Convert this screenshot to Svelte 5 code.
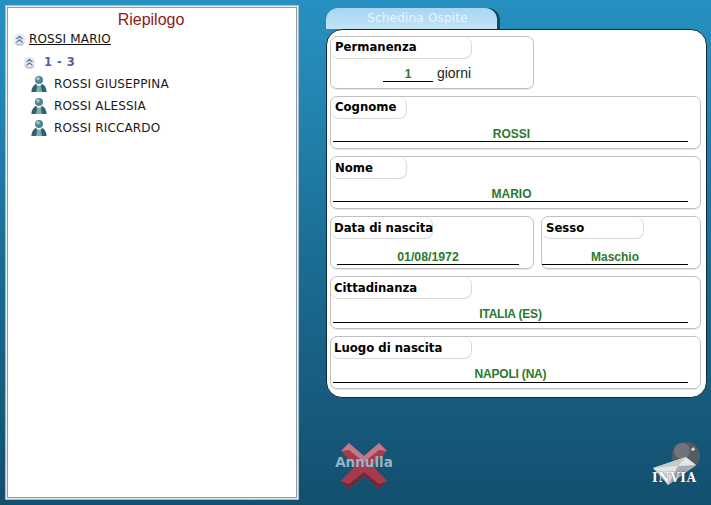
<script>
  const guests = ['ROSSI GIUSEPPINA', 'ROSSI ALESSIA', 'ROSSI RICCARDO'];
  const fields = [
    [{ label: 'Cognome', value: 'ROSSI', tab: 76, cls: 'name tight' }],
    [{ label: 'Nome', value: 'MARIO', tab: 76, cls: 'name' }],
    [
      { label: 'Data di nascita', value: '01/08/1972', tab: 102, cls: 'birth' },
      { label: 'Sesso', value: 'Maschio', tab: 102, cls: 'sex' }
    ],
    [{ label: 'Cittadinanza', value: 'ITALIA (ES)', tab: 141, cls: 'long' }],
    [{ label: 'Luogo di nascita', value: 'NAPOLI (NA)', tab: 141, cls: 'long' }]
  ];
</script>

{#snippet collapse()}
  <svg class="collapse" width="13" height="13" viewBox="0 0 13 13">
    <circle cx="6.5" cy="6.5" r="6" fill="#e8eaee" />
    <path d="M1 9a6 6 0 0 0 11 0a8 8 0 0 1-11 0z" fill="#b4b8c0" />
    <path d="M3.5 6 6.5 3.2 9.5 6M3.500 9.500 6.500 6.700 9.500 9.500" fill="none" stroke="#5a7cab" stroke-width="1.2" />
  </svg>
{/snippet}

<div class="page">
  <aside class="summary">
    <h1>Riepilogo</h1>
    <div class="root">{@render collapse()}<span>ROSSI MARIO</span></div>
    <div class="group">{@render collapse()}<b>1 - 3</b></div>
    <ul>
      {#each guests as g}
        <li>
          <svg width="16" height="18" viewBox="0 0 16 18">
            <path d="M0.500 17c0-4 2-7 4.500-8l3 2 3-2c2.500 1 4.500 4 4.500 8z" fill="#7fae9f" />
            <path d="M0.500 17c0-4 2-7 4.500-8l1 3-1 5zM15.500 17c0-4-2-7-4.500-8l-1 3 1 5z" fill="#2f5f7a" />
            <circle cx="8" cy="5" r="4" fill="#4f8592" />
            <circle cx="7" cy="3.800" r="1.800" fill="#a5c8cc" />
          </svg>
          <span>{g}</span>
        </li>
      {/each}
    </ul>
  </aside>

  <main class="right">
    <div class="tab">Schedina Ospite</div>
    <section class="card">
      <fieldset class="box stay tight">
        <div class="legend" style="width:141px">Permanenza</div>
        <div class="stay-line"><span class="days">1</span> giorni</div>
      </fieldset>
      {#each fields as row}
        <div class="row">
          {#each row as f}
            <fieldset class="box {f.cls}">
              <div class="legend" style="width:{f.tab}px">{f.label}</div>
              <div class="value">{f.value}</div>
            </fieldset>
          {/each}
        </div>
      {/each}
    </section>
    <div class="actions">
      <div class="cancel">
        <svg width="52" height="50" viewBox="0 0 52 50">
          <path d="M3 9 11 1 26 14 41 1 49 9 35 24 49 39 41 47 26 34 11 47 3 39 17 24z" fill="#a83a4e" />
          <path d="M3 9 11 1 26 14 41 1 49 9 41 8 26 20 11 8z" fill="#c0788a" />
          <path d="M3 39 11 47 26 34 41 47 49 39 41 42 26 30 11 42z" fill="#6e2a3a" />
        </svg>
        <span>Annulla</span>
      </div>
      <div class="send">
        <svg width="52" height="46" viewBox="0 0 52 46">
          <circle cx="36" cy="14" r="14" fill="#555b60" />
          <circle cx="32" cy="9" r="8" fill="#6e7478" />
          <path d="M41 7l3-2 1 3-3 1z" fill="#d8dadc" />
          <path d="M3 26 36 15 46 23 18 43z" fill="#e3e6e6" />
          <path d="M3 26 28 24 36 15z" fill="#c4cacc" />
          <path d="M18 43 28 24 46 23z" fill="#a6adb0" />
        </svg>
        <span>INVIA</span>
      </div>
    </div>
  </main>
</div>

<style>
  :global(body) {
    margin: 0;
  }

  .page {
    width: 711px;
    height: 505px;
    box-sizing: border-box;
    padding: 5px 4px 5px 5px;
    display: flex;
    gap: 27px;
    overflow: hidden;
    background: linear-gradient(#2690c0, #2488b6 15%, #1a6a90 55%, #134f6e);
  }

  .summary {
    width: 294px;
    height: 495px;
    box-sizing: border-box;
    flex: none;
    background: #fff;
    border: 1px solid #a9bcc6;
    box-shadow: inset 0 0 0 1px #e6eef2, inset 0 0 0 2px #8b9ea8;
    padding: 4px 0 0 9px;
    font: 12px "DejaVu Sans", Verdana, sans-serif;
    letter-spacing: 0.15px;
    color: #1a1a1a;
  }

  h1 {
    margin: 0 0 0 -11px;
    font: 16px/20px "Liberation Sans", Arial, sans-serif;
    letter-spacing: 0;
    color: #8b1a1a;
    text-align: center;
  }

  .collapse {
    flex: none;
  }

  .root,
  .group,
  li {
    display: flex;
    align-items: center;
  }

  .root {
    height: 18px;
    gap: 3px;
    margin-left: -2px;
  }

  .root span {
    text-decoration: underline;
    color: #111;
  }

  .group {
    height: 22px;
    margin-top: 3px;
    margin-left: 8px;
    gap: 8px;
  }

  .group b {
    color: #4f5ea8;
    font-size: 11.5px;
    letter-spacing: 0.5px;
  }

  ul {
    list-style: none;
    margin: 0;
    padding: 0;
  }

  li {
    height: 22px;
    padding-left: 16px;
    gap: 7px;
  }

  .right {
    width: 381px;
    flex: none;
    display: flex;
    flex-direction: column;
    padding-top: 3px;
  }

  .tab {
    width: 171px;
    height: 21px;
    box-sizing: border-box;
    padding-left: 12px;
    background: linear-gradient(#a6d6f2, #c4e4f6);
    border-radius: 12px 12px 0 0;
    box-shadow: 3px 0 0 #184a66;
    color: #e8f4fb;
    font: 12px/21px "DejaVu Sans", Verdana, sans-serif;
    letter-spacing: 0.2px;
    text-align: center;
  }

  .card {
    box-sizing: border-box;
    height: 369px;
    background: #fff;
    border: 1px solid #0c2a3a;
    border-radius: 16px;
    padding: 6px 5px 0 3px;
    display: flex;
    flex-direction: column;
    gap: 7px;
    position: relative;
  }

  .row {
    display: flex;
    gap: 7px;
  }

  .box {
    margin: 0;
    padding: 0;
    min-width: 0;
    flex: 1;
    height: 53px;
    box-sizing: border-box;
    border: 1px solid #c0c0c0;
    border-radius: 7px;
    box-shadow: 0 1px 0 #e6e6e6;
    display: flex;
    flex-direction: column;
  }

  .stay,
  .birth {
    flex: none;
    width: 204px;
  }

  .legend {
    height: 22px;
    box-sizing: border-box;
    border: 1px solid #d8d8d8;
    border-top: 0;
    border-left: 0;
    border-radius: 0 8px 8px 8px;
    padding-left: 3px;
    font: bold 11.7px/22px "DejaVu Sans", Verdana, sans-serif;
    white-space: nowrap;
    color: #000;
  }

  .tight .legend {
    padding-left: 4px;
    line-height: 20px;
  }

  .name .legend,
  .sex .legend {
    padding-left: 4px;
  }

  .stay-line {
    margin-top: 6px;
    padding-left: 52px;
    font: 14px/17px "Liberation Sans", Arial, sans-serif;
    color: #222;
  }

  .days {
    display: inline-block;
    width: 50px;
    text-align: center;
    border-bottom: 1px solid #000;
    color: #2a7a2a;
    font-size: 12px;
    font-weight: bold;
    line-height: 14px;
  }

  .value {
    margin: 8px 12px 0 2px;
    height: 15px;
    border-bottom: 1px solid #000;
    text-align: center;
    font: bold 12px/15px "Liberation Sans", Arial, sans-serif;
    color: #2a7a2a;
  }

  .name .value {
    margin-top: 7px;
    line-height: 17px;
    padding-left: 2px;
    height: 15px;
  }

  .long .value {
    letter-spacing: -0.2px;
  }

  .birth .value {
    margin: 10px 14px 0 6px;
    line-height: 17px;
    font-size: 12.3px;
  }

  .sex .value {
    margin: 10px 12px 0 0;
    line-height: 17px;
  }

  .actions {
    display: flex;
    justify-content: space-between;
    align-items: flex-start;
    padding: 44px 5px 0 12px;
  }

  .cancel,
  .send {
    position: relative;
    display: flex;
    justify-content: center;
  }

  .cancel span,
  .send span {
    position: absolute;
    font-weight: bold;
  }

  .cancel span {
    top: 12px;
    font: bold 13.5px "DejaVu Sans", Verdana, sans-serif;
    color: #93b6c6;
  }

  .send span {
    top: 29px;
    left: 2px;
    font: bold 12px "DejaVu Serif", serif;
    letter-spacing: 0.8px;
    color: #fff;
    text-shadow: 0 0 2px #2a3a44;
  }
</style>
